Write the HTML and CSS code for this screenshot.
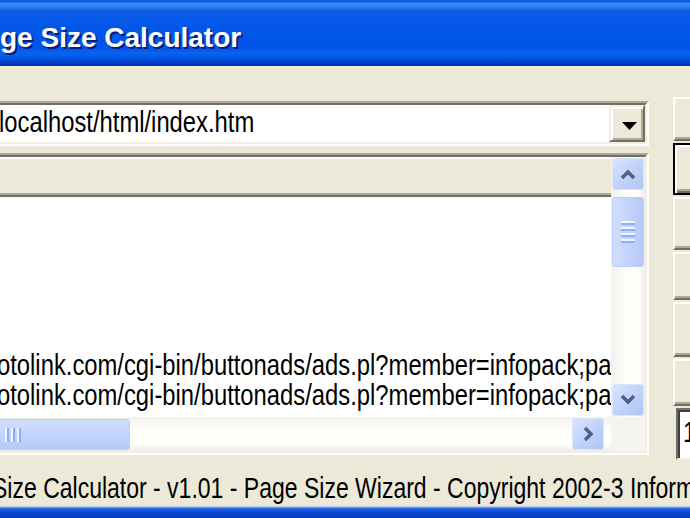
FILE: index.html
```html
<!DOCTYPE html>
<html lang="en">
<head>
    <meta charset="UTF-8">
    <title>Page Size Calculator</title>
    <link rel="stylesheet" href="styles.css">
</head>
<body>
    <div class="window">
        <div class="titlebar">
            <span class="title">ge Size Calculator</span>
        </div>

        <div class="client">
            <div class="main">
                <div class="left">
                    <!-- address combo -->
                    <div class="combo">
                        <div class="combo-inner">
                            <div class="combo-text"><span class="txt">localhost/html/index.htm</span></div>
                            <div class="combo-btn">
                                <svg width="15" height="8" viewBox="0 0 15 8"><polygon points="0,0 15,0 7.5,8" fill="#000"/></svg>
                            </div>
                        </div>
                    </div>

                    <!-- results list -->
                    <div class="listview">
                        <div class="listview-inner">
                            <div class="lv-top">
                                <div class="lv-content">
                                    <div class="lv-header"></div>
                                    <div class="lv-rows">
                                        <div class="lv-row"><span class="txt">otolink.com/cgi-bin/buttonads/ads.pl?member=infopack;pa</span></div>
                                        <div class="lv-row"><span class="txt">otolink.com/cgi-bin/buttonads/ads.pl?member=infopack;pa</span></div>
                                    </div>
                                </div>
                                <div class="vscroll">
                                    <div class="sb-btn">
                                        <svg width="16" height="12" viewBox="0 0 16 12"><polyline points="2,10 8,4 14,10" fill="none" stroke="#4d6185" stroke-width="3.5"/></svg>
                                    </div>
                                    <div class="sb-thumb-v"><div class="grip-v"></div></div>
                                    <div class="sb-space"></div>
                                    <div class="sb-btn">
                                        <svg width="16" height="12" viewBox="0 0 16 12"><polyline points="2,2 8,8 14,2" fill="none" stroke="#4d6185" stroke-width="3.5"/></svg>
                                    </div>
                                </div>
                            </div>
                            <div class="hscroll-row">
                                <div class="hscroll">
                                    <div class="sb-thumb-h"><div class="grip-h"></div></div>
                                    <div class="sb-space"></div>
                                    <div class="sb-btn sb-right">
                                        <svg width="12" height="16" viewBox="0 0 12 16"><polyline points="3,2 9,8 3,14" fill="none" stroke="#4d6185" stroke-width="3.5"/></svg>
                                    </div>
                                </div>
                                <div class="sb-corner"></div>
                            </div>
                        </div>
                    </div>
                </div>

                <!-- command buttons -->
                <div class="side">
                    <div class="btn b1"></div>
                    <div class="btn btn-default b2"></div>
                    <div class="btn b3"></div>
                    <div class="btn b4"></div>
                    <div class="btn b5"></div>
                    <div class="btn b6"></div>
                    <div class="edit"><span class="txt">1</span></div>
                </div>
            </div>

            <div class="status"><span class="txt">Size Calculator - v1.01 - Page Size Wizard - Copyright 2002-3 Inform</span></div>
        </div>

        <div class="frame-bottom"></div>
    </div>
</body>
</html>
```

FILE: styles.css
```css
body {
    margin: 0;
    overflow: hidden;
    background: #ece9d8;
    font-family: "Liberation Sans", Arial, sans-serif;
    font-size: 23.5px;
    color: #000;
}

.window {
    width: 690px;
    height: 518px;
    display: flex;
    flex-direction: column;
}

/* caption */
.titlebar {
    height: 66px;
    box-sizing: border-box;
    padding-top: 24px;
    white-space: nowrap;
    background: linear-gradient(to bottom,
        #0a5bdd 0px, #0a5bdd 2px,
        #3a8bf6 3px, #2d7ff3 7px,
        #0b5de9 11px, #0256e8 30px, #0054e6 48px,
        #0a63f0 53px, #0059ea 57px,
        #0046d3 61px, #0036b8 64px, #0030a8 66px);
}

.title {
    font-size: 28px;
    line-height: 28px;
    font-weight: bold;
    color: #fff;
    text-shadow: 2px 2px 0 #0a1f7a;
}

/* tall text, the way the old screen font looks */
.txt {
    display: inline-block;
    line-height: 30px;
    transform: scaleY(1.25);
    transform-origin: 0 23px;
    white-space: nowrap;
}

.client {
    flex: 1;
    display: flex;
    flex-direction: column;
}

.main {
    display: flex;
    gap: 24px;
    padding-top: 31px;
}

.left {
    width: 659px;
    margin-left: -10px;
    flex-shrink: 0;
    padding-top: 4px;
    display: flex;
    flex-direction: column;
    gap: 7px;
}

/* sunken / raised 3d edges */
.combo, .listview {
    box-sizing: border-box;
    border: 2px solid;
    border-color: #aca899 #fff #fff #aca899;
}

.combo-inner, .listview-inner {
    height: 100%;
    box-sizing: border-box;
    border: 2px solid;
    border-color: #716f64 #f1efe2 #f1efe2 #716f64;
    background: #fff;
}

.combo {
    height: 45px;
}

.combo-inner {
    display: flex;
}

.combo-text {
    flex: 1;
    padding-left: 5px;
    overflow: hidden;
    display: flex;
    align-items: center;
    font-size: 23.8px;
}

.combo-btn {
    width: 36px;
    box-sizing: border-box;
    border: 2px solid;
    border-color: #f1efe2 #716f64 #716f64 #f1efe2;
    box-shadow: inset 2px 2px #fff, inset -2px -2px #aca899;
    background: #ece9d8;
    display: flex;
    align-items: center;
    justify-content: center;
    padding: 4px 0 0 4px;
}

.listview {
    height: 302px;
}

.listview-inner {
    display: flex;
    flex-direction: column;
}

.lv-top {
    display: flex;
    height: 260px;
}

.lv-content {
    flex: 1;
    min-width: 0;
    display: flex;
    flex-direction: column;
    overflow: hidden;
}

.lv-header {
    height: 40px;
    flex-shrink: 0;
    box-sizing: border-box;
    border-top: 2px solid #fff;
    border-bottom: 2px solid #716f64;
    box-shadow: inset 0 -2px #aca899;
    background: #ece9d8;
}

.lv-rows {
    flex: 1;
    display: flex;
    flex-direction: column;
    justify-content: flex-end;
    padding-bottom: 5px;
}

.lv-row {
    height: 30px;
    padding-left: 3px;
    white-space: nowrap;
    font-size: 23.8px;
}

/* xp scrollbars */
.vscroll {
    width: 34px;
    display: flex;
    flex-direction: column;
    background: linear-gradient(to right, #f3f1ec, #fefefb 40%, #fefefb 80%, #eeede5);
}

.hscroll-row {
    display: flex;
    height: 34px;
}

.hscroll {
    flex: 1;
    display: flex;
    background: linear-gradient(to bottom, #f3f1ec, #fefefb 40%, #fefefb 80%, #eeede5);
}

.sb-space {
    flex: 1;
}

.sb-btn {
    width: 32px;
    height: 32px;
    margin: 1px;
    box-sizing: border-box;
    border: 1px solid #d9e4fd;
    border-radius: 3px;
    background: linear-gradient(135deg, #d8e3fe 0%, #c2d3fb 50%, #b0c5f6 100%);
    display: flex;
    align-items: center;
    justify-content: center;
}

.sb-right {
    margin-right: 7px;
}

.sb-thumb-v {
    height: 70px;
    margin: 6px 1px 0;
    box-sizing: border-box;
    border: 1px solid #b8cdf9;
    border-radius: 3px;
    background: linear-gradient(to right, #d2defd, #c0d1fb 60%, #b6c9f7);
    display: flex;
    align-items: center;
    justify-content: center;
}

.grip-v {
    width: 14px;
    height: 22px;
    background: repeating-linear-gradient(to bottom, #f0f5ff 0 2px, #8db0f5 2px 4px, transparent 4px 6px);
}

.sb-thumb-h {
    width: 136px;
    margin: 2px 0 1px;
    box-sizing: border-box;
    padding-left: 10px;
    border: 1px solid #b8cdf9;
    border-radius: 3px;
    background: linear-gradient(to bottom, #d2defd, #c0d1fb 60%, #b6c9f7);
    display: flex;
    align-items: center;
}

.grip-h {
    width: 16px;
    height: 14px;
    background: repeating-linear-gradient(to right, #f0f5ff 0 2px, #8db0f5 2px 4px, transparent 4px 6px);
}

.sb-corner {
    width: 34px;
    background: #f5f4ef;
}

/* right-hand command buttons */
.side {
    width: 120px;
    flex-shrink: 0;
    display: flex;
    flex-direction: column;
    gap: 2px;
}

.btn {
    box-sizing: border-box;
    border: 2px solid;
    border-color: #fff #716f64 #716f64 #fff;
    box-shadow: inset -2px -2px #aca899;
    background: #ece9d8;
}

.btn-default {
    border-color: #000;
    box-shadow: inset 2px 2px #fff, inset -2px -2px #716f64, inset -4px -4px #aca899;
}

.b1 { height: 44px; }
.b2 { height: 52px; }
.b3 { height: 53px; }
.b4 { height: 48px; }
.b5 { height: 55px; }
.b6 { height: 47px; }

.edit {
    height: 52px;
    margin-left: 3px;
    box-sizing: border-box;
    border: 2px solid;
    border-color: #716f64 #f1efe2 #f1efe2 #716f64;
    box-shadow: inset 2px 2px #404040;
    background: #fff;
    padding: 9px 0 0 5px;
}

.status {
    flex: 1;
    margin-left: -8px;
    padding-top: 15px;
    font-size: 23px;
    white-space: nowrap;
}

.frame-bottom {
    height: 12px;
    background: linear-gradient(to bottom, #b9c8ea 0px, #b9c8ea 1px, #2e6be6 2px, #0a4ad6 6px, #0838b8 12px);
}
```
